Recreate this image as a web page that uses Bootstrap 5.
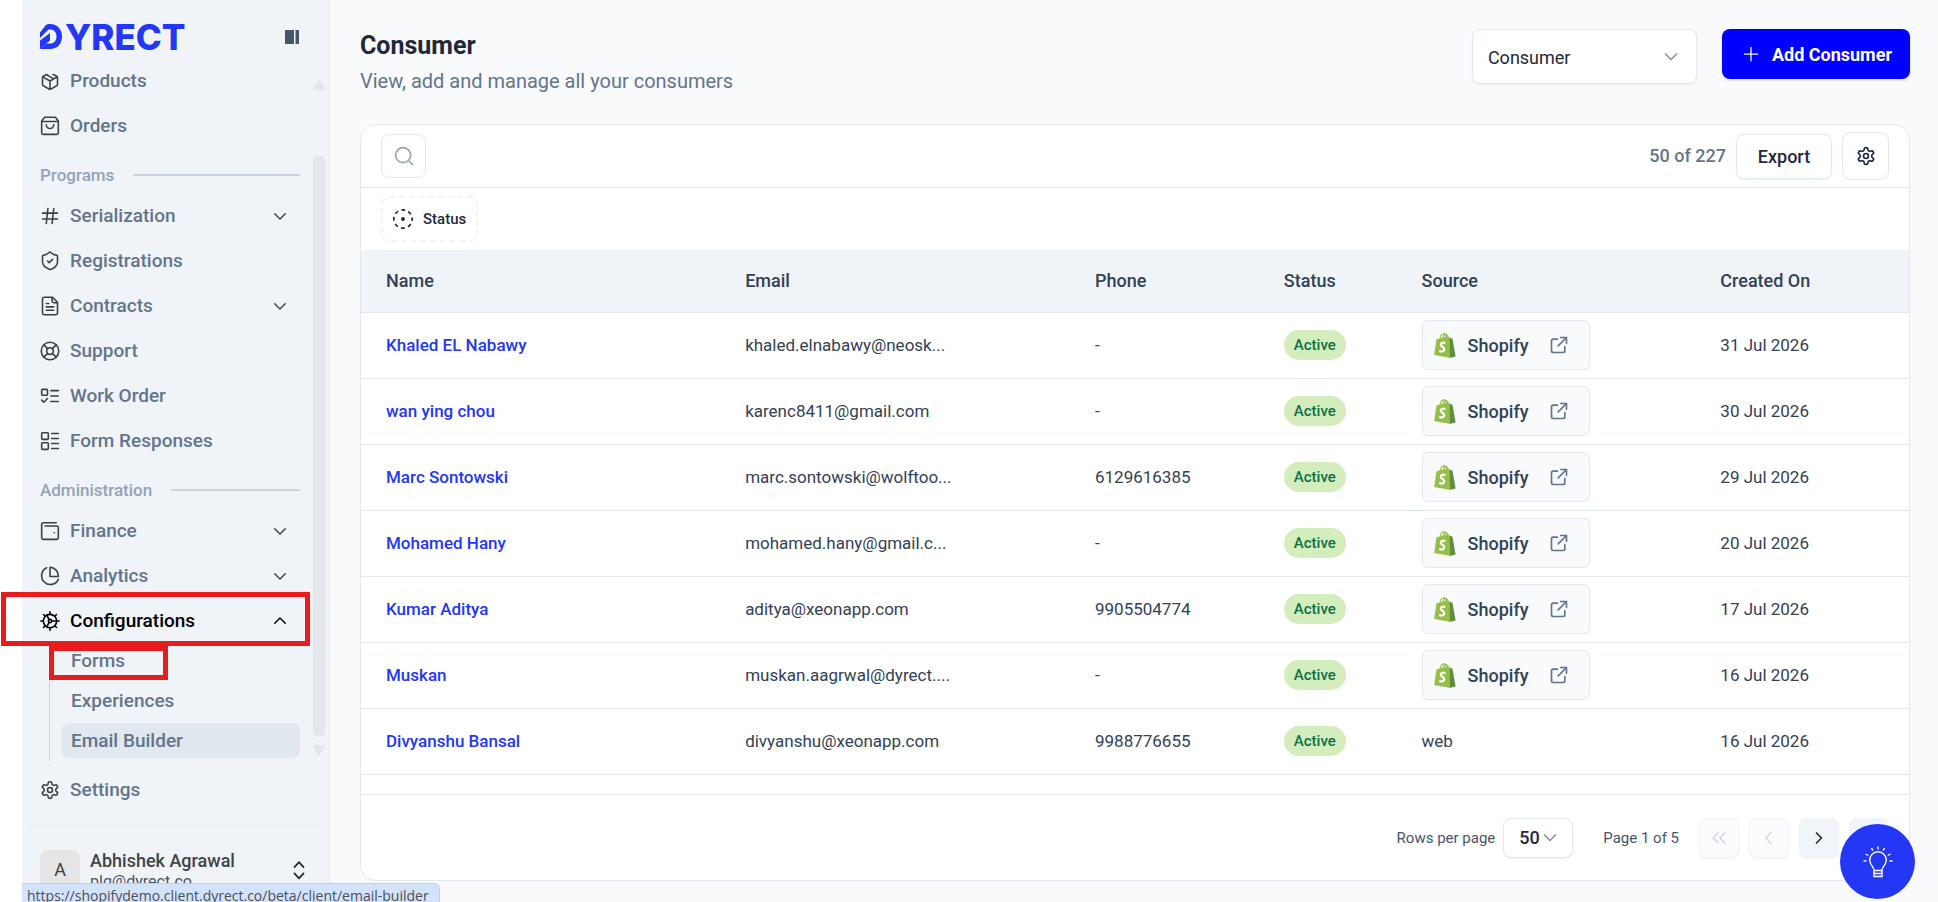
<!DOCTYPE html>
<html lang="en">
<head>
<meta charset="utf-8">
<meta name="viewport" content="width=device-width, initial-scale=1">
<title>Consumer - Dyrect</title>
<link href="https://cdn.jsdelivr.net/npm/bootstrap@5.3.0/dist/css/bootstrap.min.css" rel="stylesheet">
<style>
  :root { --line: #e2e8f0; --slate: #64748b; --ink: #334155; --brand: #2337f5; }
  body { font-family: Roboto, "Noto Sans", sans-serif; font-size: 18px; line-height: 24px; color: var(--ink); background: #fff; padding-left: 22px; height: 100vh; overflow: hidden; }
  svg { flex: none; }
  .ico { width: 20px; height: 20px; fill: none; stroke: currentColor; stroke-width: 2; stroke-linecap: round; stroke-linejoin: round; }
  .thin { stroke-width: 1.5; }

  /* sidebar */
  .side { width: 308px; flex: none; background: #f0f4f9; border-right: 1px solid var(--line); }
  .side-head { height: 74px; padding: 14px 30px 15px 18px; }
  .logo { color: var(--brand); font: 800 35px/30px Inter, sans-serif; gap: 3px; }
  .side-scroll { overflow-x: visible; overflow-y: clip; min-height: 0; padding-left: 18px; padding-right: 4px; }
  .side-nav { margin-top: -13px; gap: 5px; }
  .item { height: 40px; gap: 10px; padding-right: 11px; font-size: 19px; font-weight: 500; color: var(--slate); text-decoration: none; position: relative; }
  .item .ico { color: #3b3f46; stroke-width: 1.9; }
  .item.open, .item.open .ico { color: #000; }
  .item .chev { margin-left: auto; width: 18px; height: 18px; }
  .group-title { height: 40px; padding-top: 8px; gap: 19px; font-size: 17px; font-weight: 500; color: #94a3b8; }
  .group-title::after { content: ""; flex: 1; height: 2px; background: #cbd5e1; }
  .sub { margin: -5px 0 4px 9px; padding: 2px 0 3px 11px; border-left: 1px solid #cbd5e1; gap: 5px; }
  .sub a { height: 35px; padding-left: 10px; border-radius: 8px; font-size: 19px; font-weight: 500; color: var(--slate); text-decoration: none; position: relative; }
  .sub a.hovered { background: #e1e8f0; }
  .callout { position: absolute; border: 5px solid #e81c1c; z-index: 3; pointer-events: none; }
  .callout-menu { inset: -9px -10px -5px -39px; }
  .callout-forms { inset: 3px auto -2px -12px; width: 119px; }
  .bar { width: 12px; margin-left: 13px; padding: 6px 0 70px; color: #e3e7ec; }
  .bar-thumb { border-radius: 6px; background: #e3e6eb; margin: 65px 0 8px; }
  .side-foot { height: 77px; margin: 0 10px 0 8px; border-top: 1px solid var(--line); padding: 24px 10px 0; gap: 10px; }
  .avatar { width: 40px; height: 40px; border-radius: 8px; background: #e5e5e5; color: #404040; }
  .who { font-size: 18px; line-height: 22px; font-weight: 500; color: #404347; }
  .mail { font-size: 16px; line-height: 20px; color: #475569; }
  .swap { height: 40px; }
  .url-tip { position: fixed; left: 22px; bottom: 0; height: 19px; padding: 0 10px 0 5px; overflow: hidden; background: #d3e3fd; border: solid #c4cedd; border-width: 1px 1px 0 0; border-top-right-radius: 6px; font: 14px/24px "Open Sans", sans-serif; color: #4a4f57; white-space: nowrap; z-index: 5; }

  /* page */
  .page { background: #f8fafc; padding: 29px 28px 21px 30px; min-width: 0; }
  .page-head { height: 95px; gap: 25px; }
  h1 { font-size: 25px; line-height: 34px; font-weight: 700; color: #1e293b; }
  .lede { font-size: 20px; line-height: 28px; color: var(--slate); margin-top: 4px; }
  .pick { background-color: #fff; border: 1px solid var(--line); border-radius: 8px; color: #1e293b; box-shadow: 0 1px 2px rgba(15,23,42,.06); background-image: url("data:image/svg+xml,%3Csvg xmlns='http://www.w3.org/2000/svg' viewBox='0 0 16 16' fill='none' stroke='%238a8f98' stroke-width='1.5' stroke-linecap='round' stroke-linejoin='round'%3E%3Cpath d='M2.500 5l5.500 5.500L13.500 5'/%3E%3C/svg%3E"); background-size: 16px; }
  .pick-type { width: 225px; height: 55px; padding: 1px 40px 0 15px; font-size: 18px; background-position: right 17px center; }
  .pick-rows { width: 70px; height: 40px; padding: 0 28px 0 15px; font-size: 18px; font-weight: 500; background-position: right 14px center; }
  .btn-add { height: 50px; padding: 0 18px 0 19px; gap: 11px; border: 0; border-radius: 8px; background: #0000ff; color: #fff; font-size: 18px; font-weight: 700; box-shadow: 0 1px 3px rgba(15,23,42,.15); }
  .btn-add:hover { background: #0000d6; color: #fff; }
  .panel { background: #fff; border: 1px solid var(--line); border-radius: 16px; overflow: hidden; }
  .tools { height: 63px; padding: 0 20px; gap: 10px; border-bottom: 1px solid var(--line); }
  .filters { height: 62px; padding: 8px 20px; }
  .box { border: 1px solid var(--line); border-radius: 8px; background: #fff; color: #1e293b; padding: 0; }
  .box-search { width: 45px; height: 44px; color: #94a3b8; }
  .box-export { width: 96px; height: 45px; font-size: 18px; font-weight: 500; box-shadow: 0 1px 2px rgba(15,23,42,.08); }
  .box-gear { width: 47px; height: 48px; }
  .total { font-weight: 500; color: var(--slate); }
  .box-status { height: 46px; padding: 0 10px; gap: 10px; border: 2px dashed #f1f5f9; font-size: 15px; font-weight: 500; }
  .people { table-layout: fixed; margin: 0; border-bottom: 1px solid var(--line); }
  .people th, .people td { height: 66px; padding: 0 0 0 25px; vertical-align: middle; border-bottom: 1px solid var(--line); color: var(--ink); background: transparent; white-space: nowrap; }
  .people thead th { height: 62px; background: #f0f4f9; font-size: 18px; font-weight: 500; }
  .people td { font-size: 17px; }
  .who-link { color: var(--brand); font-weight: 500; text-decoration: none; }
  .state { display: inline-block; height: 30px; border-radius: 15px; padding: 0 10px; background: #d4edbc; color: #0f7048; font-size: 15px; line-height: 31px; font-weight: 500; vertical-align: middle; }
  .src { width: 168px; height: 50px; padding: 0 20px 0 11px; border-color: var(--line); background: #f8fafc; color: var(--ink); font-size: 18px; font-weight: 500; vertical-align: middle; }
  .src .ico { margin-left: auto; color: var(--slate); }
  .rest { border-bottom: 1px solid var(--line); min-height: 20px; }
  .pager { height: 85px; flex: none; padding: 0 20px; font-size: 15px; color: #475569; }
  .pages { margin: 0 20px 0 30px; }
  .pg { width: 40px; height: 40px; border: 0; border-radius: 8px; background: #f1f5f9; color: #1e293b; padding: 0; box-shadow: 0 1px 2px rgba(15,23,42,.05); }
  .pg-set { gap: 10px; }
  .pg:disabled { border: 1px solid #f1f5f9; background: #fafcfd; color: #ccd3dc; opacity: 1; }
  .tips { position: fixed; right: 23px; bottom: 3px; width: 75px; height: 75px; border: 0; background: var(--brand); color: #fff; z-index: 5; }
</style>
</head>
<body class="d-flex">
<svg class="d-none" xmlns="http://www.w3.org/2000/svg">
  <symbol id="down" viewBox="0 0 24 24"><path d="m5 9 7 7 7-7"/></symbol>
  <symbol id="up" viewBox="0 0 24 24"><path d="m5 15 7-7 7 7"/></symbol>
  <symbol id="gear" viewBox="0 0 24 24"><path d="M12.220 2h-.44a2 2 0 0 0-2 2v.18a2 2 0 0 1-1 1.730l-.43.25a2 2 0 0 1-2 0l-.15-.08a2 2 0 0 0-2.730.73l-.22.38a2 2 0 0 0 .73 2.730l.15.1a2 2 0 0 1 1 1.720v.51a2 2 0 0 1-1 1.740l-.15.09a2 2 0 0 0-.73 2.730l.22.38a2 2 0 0 0 2.730.73l.15-.08a2 2 0 0 1 2 0l.43.25a2 2 0 0 1 1 1.730V20a2 2 0 0 0 2 2h.44a2 2 0 0 0 2-2v-.18a2 2 0 0 1 1-1.730l.43-.25a2 2 0 0 1 2 0l.15.08a2 2 0 0 0 2.730-.73l.22-.39a2 2 0 0 0-.73-2.730l-.15-.08a2 2 0 0 1-1-1.740v-.5a2 2 0 0 1 1-1.740l.15-.09a2 2 0 0 0 .73-2.730l-.22-.38a2 2 0 0 0-2.730-.73l-.15.08a2 2 0 0 1-2 0l-.43-.25a2 2 0 0 1-1-1.730V4a2 2 0 0 0-2-2z"/><circle cx="12" cy="12" r="3"/></symbol>
  <symbol id="ext" viewBox="0 0 24 24"><path d="M14 3h7v7M21 3 11 13M19 14v5a2 2 0 0 1-2 2H5a2 2 0 0 1-2-2V7a2 2 0 0 1 2-2h5"/></symbol>
  <symbol id="bag" viewBox="0 0 22 25"><path fill="#95bf47" d="M2.400 6.400 13.700 3.300l1.600 1.300.2 20.200L.2 21.900z"/><path fill="#5e8e3e" d="m15.300 4.600 3.200 1.100 3.100 17.700-6.100 1.500z"/><path fill="none" stroke="#95bf47" stroke-width="1.200" d="M6 6.500C6.300 3.500 8 1 9.800.9c1.800 0 2.600 1.800 2.600 4M9 5.500C9.500 3 11 1.300 12.300 1.500c1.200.2 1.700 1.400 1.800 2.600"/><path fill="none" stroke="#fff" stroke-width="2.200" d="M11.300 10.200C9.400 9.200 6.800 9.800 6.800 11.700c0 2 3.500 2.200 3.500 4.600 0 2.200-2.600 2.900-5 1.400"/></symbol>
</svg>

<aside class="side vh-100 d-flex flex-column">
  <div class="side-head d-flex align-items-center justify-content-between">
    <a class="logo d-flex align-items-center text-decoration-none" href="#"><svg width="22" height="25" viewBox="0 0 22 25" fill="#2337f5" aria-hidden="true"><path d="M0 8.500 5.500 1.500Q6.500 0 8.500 0H10c7.500 0 12 5.500 12 12.500S17.500 25 10 25H0l6.500-5.500H10c4 0 6.500-2.700 6.500-7s-2.500-7-6.500-7H8.500L0 14z"/><path d="M0 16.500 10 9v7.500L0 25z"/></svg><span>YRECT</span></a>
    <button class="btn p-0 border-0 lh-1 d-flex" aria-label="Collapse sidebar"><svg width="14" height="14" fill="#475569"><path d="M0 0h9v14H0zM10.500 0H14v14h-3.500z"/></svg></button>
  </div>
  <div class="side-scroll d-flex flex-grow-1">
    <nav class="side-nav d-flex flex-column flex-grow-1" aria-label="Main">
      <a class="item d-flex align-items-center" href="#"><svg class="ico" viewBox="0 0 24 24"><path d="M11 21.700a2 2 0 0 0 2 0l7-4a2 2 0 0 0 1-1.700V8a2 2 0 0 0-1-1.700l-7-4a2 2 0 0 0-2 0l-7 4A2 2 0 0 0 3 8v8a2 2 0 0 0 1 1.700zM12 22V12M3.300 7 12 12l8.700-5M7.500 4.300l9 5.100"/></svg>Products</a>
      <a class="item d-flex align-items-center" href="#"><svg class="ico" viewBox="0 0 24 24"><path d="M5.500 1.500h13L22 6v14a2 2 0 0 1-2 2H4a2 2 0 0 1-2-2V6zM2 6.500h20M16.500 10.500a4.500 4.500 0 0 1-9 0"/></svg>Orders</a>
      <div class="group-title d-flex align-items-center">Programs</div>
      <a class="item d-flex align-items-center" href="#"><svg class="ico" viewBox="0 0 24 24"><path d="M3 8.500h18M3 15.500h18M9.500 3 7.500 21M16.500 3l-2 18"/></svg>Serialization<svg class="ico chev"><use href="#down"/></svg></a>
      <a class="item d-flex align-items-center" href="#"><svg class="ico" viewBox="0 0 24 24"><path d="M21 13c0 5-3.500 7.500-8.300 9.200a1 1 0 0 1-.7 0C7 20.500 3 18 3 13V6a1 1 0 0 1 1-1c2.300 0 5-1.400 7-3.200a1.300 1.300 0 0 1 1.700 0C14.800 3.600 17.700 5 20 5a1 1 0 0 1 1 1zM9 12l2 2 4-4"/></svg>Registrations</a>
      <a class="item d-flex align-items-center" href="#"><svg class="ico" viewBox="0 0 24 24"><path d="M15 1.500H5a2 2 0 0 0-2 2v17a2 2 0 0 0 2 2h14a2 2 0 0 0 2-2v-13zM14.500 1.500V6a2 2 0 0 0 2 2H21M10.500 9H7.500M16.500 13h-9M16.500 17h-9"/></svg>Contracts<svg class="ico chev"><use href="#down"/></svg></a>
      <a class="item d-flex align-items-center" href="#"><svg class="ico" viewBox="0 0 24 24"><circle cx="12" cy="12" r="10.500"/><circle cx="12" cy="12" r="4"/><path d="m4.600 4.600 4.600 4.600M14.800 9.200l4.600-4.600M14.800 14.800l4.600 4.600M9.200 14.800l-4.600 4.600"/></svg>Support</a>
      <a class="item d-flex align-items-center" href="#"><svg class="ico" viewBox="0 0 24 24"><rect x="2" y="4" width="7" height="7" rx="1"/><path d="m2 17 2.500 2.500L9 15M13 5.500h9M13 12h9M13 18.500h9"/></svg>Work Order</a>
      <a class="item d-flex align-items-center" href="#"><svg class="ico" viewBox="0 0 24 24"><rect x="2" y="2" width="8" height="8" rx="1"/><rect x="2" y="14" width="8" height="8" rx="1"/><path d="M14 3h8M14 9h8M14 15h8M14 21h8"/></svg>Form Responses</a>
      <div class="group-title d-flex align-items-center">Administration</div>
      <a class="item d-flex align-items-center" href="#"><svg class="ico" viewBox="0 0 24 24"><path d="M19.500 2H4a2 2 0 0 0-2 2v16a2 2 0 0 0 2 2h16a2 2 0 0 0 2-2V8a2 2 0 0 0-2-2H6M17 14h.1"/></svg>Finance<svg class="ico chev"><use href="#down"/></svg></a>
      <a class="item d-flex align-items-center" href="#"><svg class="ico" viewBox="0 0 24 24"><path d="M22 12.500A10.500 10.500 0 0 0 12 1.500v11zM22 16A10.500 10.500 0 1 1 8 2.200"/></svg>Analytics<svg class="ico chev"><use href="#down"/></svg></a>
      <a class="item open d-flex align-items-center" href="#" aria-expanded="true"><svg class="ico" viewBox="0 0 24 24"><circle cx="12" cy="12" r="8"/><circle cx="12" cy="12" r="2"/><path d="M12 1v3M12 20v3M1 12h3M20 12h3M4.200 4.200l2.100 2.100M17.700 17.700l2.100 2.100M4.200 19.800l2.100-2.100M17.700 6.300l2.100-2.100M14 12h6M11 10.300 8 5M11 13.700 8 19"/></svg>Configurations<svg class="ico chev"><use href="#up"/></svg><span class="callout callout-menu"></span></a>
      <div class="sub d-flex flex-column">
        <a class="d-flex align-items-center" href="#">Forms<span class="callout callout-forms"></span></a>
        <a class="d-flex align-items-center" href="#">Experiences</a>
        <a class="hovered d-flex align-items-center" href="#">Email Builder</a>
      </div>
      <a class="item d-flex align-items-center" href="#"><svg class="ico"><use href="#gear"/></svg>Settings</a>
    </nav>
    <div class="bar d-flex flex-column" aria-hidden="true">
      <svg width="12" height="10" fill="currentColor"><path d="M6 0q1 0 2 1.500l4 6.500q0 2-1 2H1q-1 0-1-2l4-6.500Q5 0 6 0z"/></svg>
      <div class="bar-thumb flex-grow-1"></div>
      <svg width="12" height="10" fill="currentColor"><path d="M6 10q1 0 2-1.500l4-6.500q0-2-1-2H1Q0 0 0 2l4 6.500Q5 10 6 10z"/></svg>
    </div>
  </div>
  <div class="side-foot d-flex flex-shrink-0">
    <div class="avatar d-flex align-items-center justify-content-center">A</div>
    <div><div class="who">Abhishek Agrawal</div><div class="mail">plg@dyrect.co</div></div>
    <button class="btn swap p-0 border-0 ms-auto d-flex align-items-center" aria-label="Switch account"><svg class="ico" viewBox="0 0 24 24"><path d="m6.500 8.500 5.500-6 5.500 6M6.500 16l5.500 6 5.500-6"/></svg></button>
  </div>
</aside>

<main class="page vh-100 flex-grow-1 d-flex flex-column">
  <header class="page-head d-flex flex-shrink-0 align-items-start">
    <div class="me-auto"><h1 class="mb-0">Consumer</h1><p class="lede mb-0">View, add and manage all your consumers</p></div>
    <select class="form-select pick pick-type" aria-label="Contact type"><option>Consumer</option></select>
    <button class="btn btn-add d-flex align-items-center"><svg class="ico thin" viewBox="0 0 24 24"><path d="M4 12h16M12 4v16"/></svg>Add Consumer</button>
  </header>

  <section class="panel d-flex flex-column flex-grow-1">
    <div class="tools d-flex align-items-center flex-shrink-0">
      <button class="btn box box-search me-auto d-flex align-items-center justify-content-center" aria-label="Search"><svg class="ico" viewBox="0 0 24 24"><circle cx="11" cy="11" r="9"/><path d="m22 22-4-4"/></svg></button>
      <span class="total">50 of 227</span>
      <button class="btn box box-export">Export</button>
      <button class="btn box box-gear d-flex align-items-center justify-content-center" aria-label="Table settings"><svg class="ico"><use href="#gear"/></svg></button>
    </div>
    <div class="filters d-flex flex-shrink-0">
      <button class="btn box box-status d-flex align-items-center"><svg class="ico" viewBox="0 0 24 24"><circle cx="12" cy="12" r="11" stroke-dasharray="4.640 4" stroke-dashoffset="2.320" stroke-linecap="butt"/><circle cx="12" cy="12" r="1.300" fill="currentColor"/></svg>Status</button>
    </div>
    <table class="table people flex-shrink-0">
      <colgroup><col style="width:23.2%"><col style="width:22.6%"><col style="width:12.2%"><col style="width:8.9%"><col style="width:19.3%"><col style="width:13.8%"></colgroup>
      <thead><tr><th>Name</th><th>Email</th><th>Phone</th><th>Status</th><th>Source</th><th>Created On</th></tr></thead>
      <tbody>
        <tr><td><a class="who-link" href="#">Khaled EL Nabawy</a></td><td>khaled.elnabawy@neosk...</td><td>-</td><td><span class="state">Active</span></td><td><a class="btn src d-inline-flex align-items-center" href="#"><svg class="me-2" width="22" height="25"><use href="#bag"/></svg><span class="ms-1">Shopify</span><svg class="ico"><use href="#ext"/></svg></a></td><td>31 Jul 2026</td></tr>
        <tr><td><a class="who-link" href="#">wan ying chou</a></td><td>karenc8411@gmail.com</td><td>-</td><td><span class="state">Active</span></td><td><a class="btn src d-inline-flex align-items-center" href="#"><svg class="me-2" width="22" height="25"><use href="#bag"/></svg><span class="ms-1">Shopify</span><svg class="ico"><use href="#ext"/></svg></a></td><td>30 Jul 2026</td></tr>
        <tr><td><a class="who-link" href="#">Marc Sontowski</a></td><td>marc.sontowski@wolftoo...</td><td>6129616385</td><td><span class="state">Active</span></td><td><a class="btn src d-inline-flex align-items-center" href="#"><svg class="me-2" width="22" height="25"><use href="#bag"/></svg><span class="ms-1">Shopify</span><svg class="ico"><use href="#ext"/></svg></a></td><td>29 Jul 2026</td></tr>
        <tr><td><a class="who-link" href="#">Mohamed Hany</a></td><td>mohamed.hany@gmail.c...</td><td>-</td><td><span class="state">Active</span></td><td><a class="btn src d-inline-flex align-items-center" href="#"><svg class="me-2" width="22" height="25"><use href="#bag"/></svg><span class="ms-1">Shopify</span><svg class="ico"><use href="#ext"/></svg></a></td><td>20 Jul 2026</td></tr>
        <tr><td><a class="who-link" href="#">Kumar Aditya</a></td><td>aditya@xeonapp.com</td><td>9905504774</td><td><span class="state">Active</span></td><td><a class="btn src d-inline-flex align-items-center" href="#"><svg class="me-2" width="22" height="25"><use href="#bag"/></svg><span class="ms-1">Shopify</span><svg class="ico"><use href="#ext"/></svg></a></td><td>17 Jul 2026</td></tr>
        <tr><td><a class="who-link" href="#">Muskan</a></td><td>muskan.aagrwal@dyrect....</td><td>-</td><td><span class="state">Active</span></td><td><a class="btn src d-inline-flex align-items-center" href="#"><svg class="me-2" width="22" height="25"><use href="#bag"/></svg><span class="ms-1">Shopify</span><svg class="ico"><use href="#ext"/></svg></a></td><td>16 Jul 2026</td></tr>
        <tr><td><a class="who-link" href="#">Divyanshu Bansal</a></td><td>divyanshu@xeonapp.com</td><td>9988776655</td><td><span class="state">Active</span></td><td>web</td><td>16 Jul 2026</td></tr>
      </tbody>
    </table>
    <div class="rest flex-grow-1"></div>
    <div class="pager d-flex align-items-center justify-content-end">
      <label for="rows" class="me-2">Rows per page</label>
      <select id="rows" class="form-select pick pick-rows"><option>50</option></select>
      <span class="pages">Page 1 of 5</span>
      <div class="pg-set d-flex">
        <button class="btn pg" disabled aria-label="First page"><svg class="ico thin" viewBox="0 0 24 24"><path d="m11 6-6 6 6 6M19 6l-6 6 6 6"/></svg></button>
        <button class="btn pg" disabled aria-label="Previous page"><svg class="ico thin" viewBox="0 0 24 24"><path d="m15 5-7 7 7 7"/></svg></button>
        <button class="btn pg" aria-label="Next page"><svg class="ico" viewBox="0 0 24 24"><path d="m9 6 6 6-6 6"/></svg></button>
        <button class="btn pg" aria-label="Last page"><svg class="ico" viewBox="0 0 24 24"><path d="m5 6 6 6-6 6M13 6l6 6-6 6"/></svg></button>
      </div>
    </div>
  </section>
</main>

<button class="tips rounded-circle d-flex align-items-center justify-content-center p-0" aria-label="Tips"><svg width="30" height="32" viewBox="0 0 30 32" fill="none" stroke="#fff" stroke-width="1.400"><path d="M11 24.500c0-4-4.300-5.500-4.300-10.500a8.300 8.300 0 0 1 16.600 0c0 5-4.300 6.500-4.300 10.500zM11 27.500h8M11 24.500v6h8v-6M15 .5v3M8.500 2l1.300 2.600M21.500 2l-1.300 2.600M2.500 8l2.800 1.500M27.500 8l-2.800 1.500M.5 15h3M26.500 15h3"/></svg></button>
<div class="url-tip">https://shopifydemo.client.dyrect.co/beta/client/email-builder</div>
<script src="https://cdn.jsdelivr.net/npm/bootstrap@5.3.0/dist/js/bootstrap.bundle.min.js"></script>
</body>
</html>
